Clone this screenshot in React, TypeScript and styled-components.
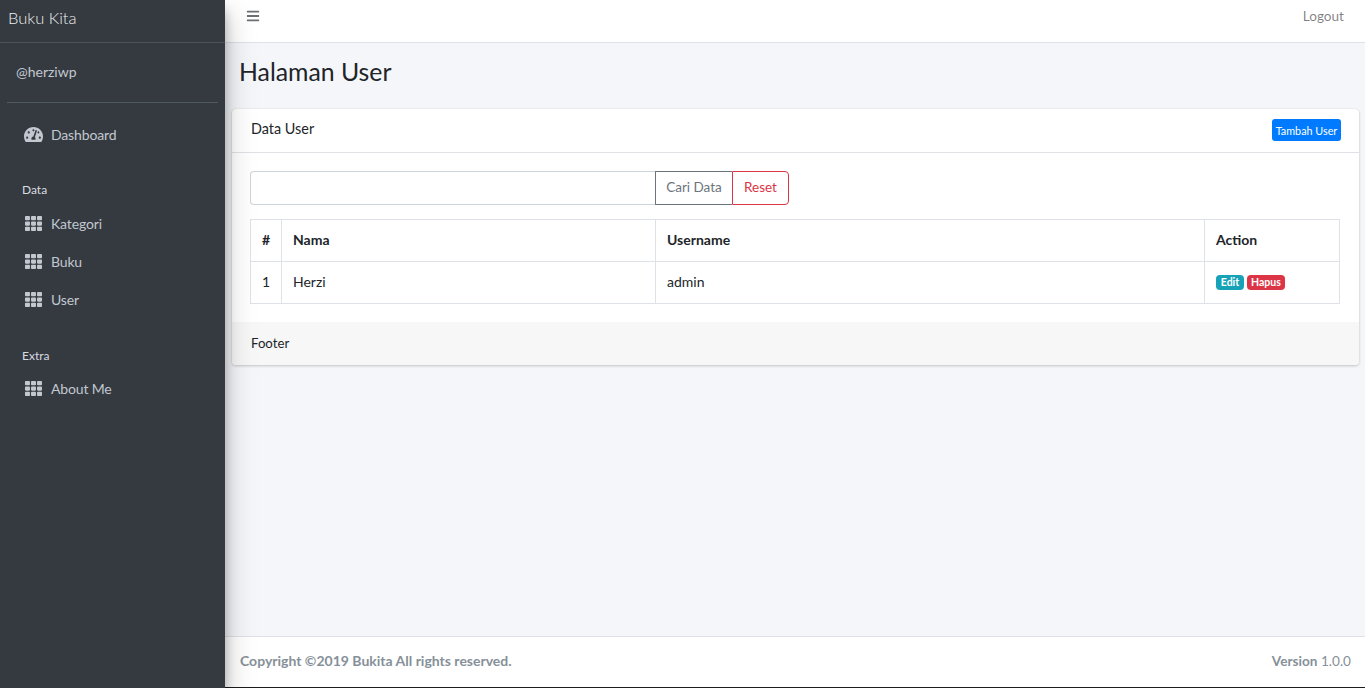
import React from "react";
import styled, {createGlobalStyle} from "styled-components";
import {FaBars, FaTachometerAlt, FaTh} from "react-icons/fa";

const GlobalStyle = createGlobalStyle`
  * {
    box-sizing: border-box;
  }
  html, body {
    margin: 0;
    height: 100%;
  }
  body {
    font-family: "Lato", "Open Sans", sans-serif;
    font-size: 14.5px;
    color: #212529;
    background: #f4f6f9;
  }
`

const Wrapper = styled.div`
  display: flex;
  height: 688px;
  overflow: hidden;
`

const Sidebar = styled.aside`
  width: 225px;
  flex-shrink: 0;
  background-color: #343a40;
  box-shadow: 0 14px 28px rgba(0, 0, 0, 0.25), 0 10px 10px rgba(0, 0, 0, 0.22);
  z-index: 2;
`

const Brand = styled.div`
  height: 43px;
  padding: 8px 8px 0;
  font-size: 16.5px;
  line-height: 20px;
  font-weight: 300;
  color: rgba(255, 255, 255, 0.95);
  border-bottom: 1px solid #4b545c;
`

const UserPanel = styled.div`
  margin: 0 7px;
  height: 60px;
  padding: 20px 9px 0;
  font-size: 14px;
  line-height: 18px;
  color: #c2c7d0;
  border-bottom: 1px solid #4f5962;
`

const Nav = styled.nav`
  padding-top: 12px;
`

const NavLink = styled.div`
  display: flex;
  align-items: center;
  height: 38px;
  padding-left: 24px;
  font-size: 14px;
  letter-spacing: -0.15px;
  color: #c2c7d0;
`

const NavIcon = styled.span<{$size: number}>`
  display: flex;
  justify-content: center;
  width: 19px;
  margin-right: 8px;
  font-size: ${p => p.$size}px;
`

const NavHeader = styled.div<{$gap: number; $after: number}>`
  margin-top: ${p => p.$gap}px;
  margin-bottom: ${p => p.$after}px;
  height: 20px;
  padding-left: 22px;
  font-size: 12px;
  line-height: 20px;
  color: #d8dbe1;
`

const Main = styled.div`
  flex: 1;
  min-width: 0;
  display: flex;
  flex-direction: column;
`

const TopBar = styled.header`
  height: 43px;
  display: flex;
  align-items: flex-start;
  justify-content: space-between;
  padding: 9px 21px 0 21px;
  background: #fff;
  border-bottom: 1px solid #dee2e6;
  color: rgba(0, 0, 0, 0.5);
`

const MenuToggle = styled.span`
  display: flex;
  font-size: 14px;
  color: #6b6f73;
`

const Logout = styled.span`
  font-size: 13.6px;
  line-height: 15px;
`

const Content = styled.main`
  flex: 1;
  padding: 0 6px 0 7px;
`

const PageTitle = styled.h1`
  margin: 0;
  height: 66px;
  padding: 14px 0 0 7px;
  font-size: 24.8px;
  line-height: 30px;
  font-weight: 400;
  color: #212529;
`

const Card = styled.section`
  background: #fff;
  border-radius: 4px;
  box-shadow: 0 0 1px rgba(0, 0, 0, 0.125), 0 1px 3px rgba(0, 0, 0, 0.2);
`

const CardHeader = styled.div`
  height: 44px;
  display: flex;
  align-items: flex-start;
  justify-content: space-between;
  padding: 10px 18px 0 19px;
  border-bottom: 1px solid #dfe1e4;
`

const CardTitle = styled.h3`
  margin: 1px 0 0;
  font-size: 14.4px;
  line-height: 18px;
  font-weight: 400;
`

const AddButton = styled.button`
  height: 22px;
  width: 69px;
  padding: 0;
  border: 0;
  border-radius: 3px;
  background: #007bff;
  color: #fff;
  font-family: inherit;
  font-size: 10.8px;
  font-weight: 400;
`

const CardBody = styled.div`
  padding: 18px 19px 18px 18px;
`

const SearchRow = styled.div`
  display: flex;
  height: 34px;
  margin-bottom: 14px;
`

const SearchInput = styled.input`
  width: 405px;
  border: 1px solid #ced4da;
  border-right: 0;
  border-radius: 4px 0 0 4px;
  background: #fff;
`

const OutlineButton = styled.button<{$color: string; $last?: boolean}>`
  padding: 0 0 2px;
  width: ${p => (p.$last ? 57 : 77)}px;
  border: 1px solid ${p => p.$color};
  border-right-width: ${p => (p.$last ? 1 : 0)}px;
  border-radius: ${p => (p.$last ? "0 4px 4px 0" : "0")};
  background: transparent;
  color: ${p => p.$color};
  font-family: inherit;
  font-size: 13.5px;
`

const Table = styled.table`
  width: 1090px;
  border-collapse: collapse;
  table-layout: fixed;
`

const Th = styled.th<{$width: number}>`
  width: ${p => p.$width}px;
  height: 42px;
  padding: 0 11px 2px;
  border: 1px solid #dee2e6;
  font-size: 14px;
  text-align: left;
`

const Td = styled.td`
  height: 42px;
  padding: 0 11px 2px;
  border: 1px solid #dee2e6;
  font-size: 14px;
`

const Badge = styled.span<{$bg: string}>`
  display: inline-block;
  margin-right: 3px;
  min-width: 28px;
  padding: 0 4px;
  height: 15px;
  border-radius: 4px;
  background: ${p => p.$bg};
  color: #fff;
  font-size: 10.5px;
  font-weight: 700;
  line-height: 15px;
  text-align: center;
  vertical-align: middle;
`

const CardFooter = styled.div`
  height: 43px;
  display: flex;
  align-items: center;
  padding: 0 0 2px 19px;
  background: #f7f7f7;
  border-radius: 0 0 4px 4px;
  font-size: 13.2px;
`

const Footer = styled.footer`
  height: 52px;
  display: flex;
  align-items: center;
  justify-content: space-between;
  padding: 0 14px 3px 15px;
  background: #fff;
  border-top: 1px solid #dee2e6;
  border-bottom: 1px solid #1c1c1c;
  color: #869099;
  font-size: 14px;
`

const Strong = styled.strong`
  font-weight: 700;
`

const Version = styled.span`
  font-size: 13.6px;
`

const menuData = [
    {gap: 27, after: 4, title: "Data", items: ["Kategori", "Buku", "User"]},
    {gap: 28, after: 3, title: "Extra", items: ["About Me"]},
]

const App: React.FC = () => {
    return (
        <Wrapper>
            <GlobalStyle/>
            <Sidebar>
                <Brand>Buku Kita</Brand>
                <UserPanel>@herziwp</UserPanel>
                <Nav>
                    <NavLink>
                        <NavIcon $size={19}><FaTachometerAlt/></NavIcon>
                        Dashboard
                    </NavLink>
                    {menuData.map(group => (
                        <div key={group.title}>
                            <NavHeader $gap={group.gap} $after={group.after}>{group.title}</NavHeader>
                            {group.items.map(item => (
                                <NavLink key={item}>
                                    <NavIcon $size={17}><FaTh/></NavIcon>
                                    {item}
                                </NavLink>
                            ))}
                        </div>
                    ))}
                </Nav>
            </Sidebar>
            <Main>
                <TopBar>
                    <MenuToggle><FaBars/></MenuToggle>
                    <Logout>Logout</Logout>
                </TopBar>
                <Content>
                    <PageTitle>Halaman User</PageTitle>
                    <Card>
                        <CardHeader>
                            <CardTitle>Data User</CardTitle>
                            <AddButton type="button">Tambah User</AddButton>
                        </CardHeader>
                        <CardBody>
                            <SearchRow>
                                <SearchInput type="text"/>
                                <OutlineButton type="button" $color="#6c757d">Cari Data</OutlineButton>
                                <OutlineButton type="button" $color="#dc3545" $last>Reset</OutlineButton>
                            </SearchRow>
                            <Table>
                                <thead>
                                    <tr>
                                        <Th $width={31}>#</Th>
                                        <Th $width={374}>Nama</Th>
                                        <Th $width={549}>Username</Th>
                                        <Th $width={135}>Action</Th>
                                    </tr>
                                </thead>
                                <tbody>
                                    <tr>
                                        <Td>1</Td>
                                        <Td>Herzi</Td>
                                        <Td>admin</Td>
                                        <Td>
                                            <Badge $bg="#17a2b8">Edit</Badge>
                                            <Badge $bg="#dc3545">Hapus</Badge>
                                        </Td>
                                    </tr>
                                </tbody>
                            </Table>
                        </CardBody>
                        <CardFooter>Footer</CardFooter>
                    </Card>
                </Content>
                <Footer>
                    <Strong>Copyright ©2019 Bukita All rights reserved.</Strong>
                    <Version><Strong>Version</Strong> 1.0.0</Version>
                </Footer>
            </Main>
        </Wrapper>
    )
}

export default App;
